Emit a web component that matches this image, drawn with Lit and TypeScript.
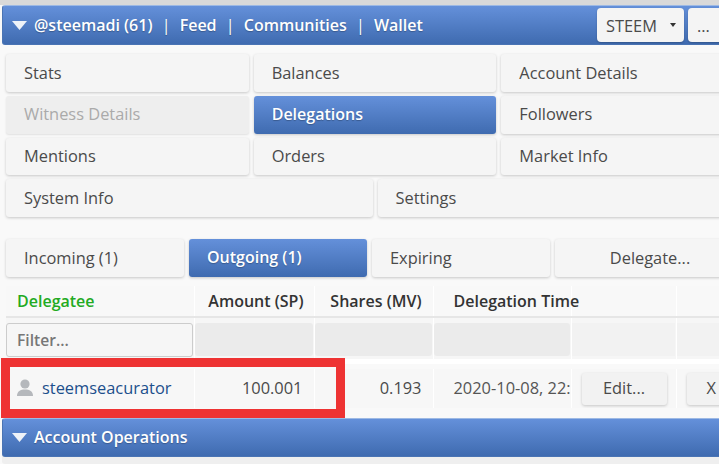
import { LitElement, html, css } from "lit";
import { customElement } from "lit/decorators.js";

@customElement("app-root")
export class AppRoot extends LitElement {
  static styles = css`
    :host {
      display: block;
      position: relative;
      width: 719px;
      height: 464px;
      overflow: hidden;
      background: #f9f9f9;
      font-family: "Open Sans", sans-serif;
      font-size: 16.4px;
      color: #4a4a4a;
    }
    .topline { height: 5px; background: #d9d9d9; }
    .wide { width: 749px; }
    .bar {
      height: 40px;
      margin-left: 2px;
      box-sizing: border-box;
      display: flex;
      align-items: center;
      border: 1px solid #4a74b4;
      border-top-color: #9db9e4;
      border-radius: 3px 0 0 3px;
      background: linear-gradient(#6490da, #3f6bb0);
      color: #fff;
      font-size: 16px;
      font-weight: 600;
      text-shadow: 0 1px 1px rgba(0,0,0,.25);
      padding-left: 9px;
      white-space: nowrap;
    }
    .tri { width: 15px; height: 9px; margin-right: 7px; flex: none; }
    .sep { margin: 0 9.2px; font-weight: 400; }
    .nav { flex: 1; display: flex; }
    .selects { display: flex; gap: 4px; }
    .pick {
      height: 34px; box-sizing: border-box; background: #f4f4f4; border-radius: 4px;
      color: #4a4a4a; font-size: 16.4px; font-weight: 400; text-shadow: none;
      box-shadow: 0 1px 2px rgba(0,0,0,.22);
      display: flex; align-items: center; padding-left: 9px;
    }
    .p1 { width: 87px; gap: 13px; }
    .p2 { width: 60px; }
    .caret { width: 6px; height: 6px; }
    .menu {
      padding: 9.3px 0 0 6px; display: grid; grid-template-columns: repeat(6, 1fr);
      width: 738px; gap: 4px 5px;
    }
    .btn {
      box-sizing: border-box;
      height: 37.7px;
      grid-column: span 2;
      background: #f5f5f5;
      border-radius: 3px;
      box-shadow: 0 1px 3px rgba(0,0,0,.2);
      display: flex; align-items: center;
      padding: 0 0 2px 18px;
      white-space: nowrap;
    }
    .btn.half { grid-column: span 3; }
    .btn.off { color: #aaa; background: #eee; box-shadow: 0 1px 2px rgba(0,0,0,.1); }
    .btn.on {
      background: linear-gradient(#6490da, #3f6bb0);
      color: #fff; font-size: 16px; font-weight: 600;
      text-shadow: 0 1px 1px rgba(0,0,0,.25);
    }
    .tabs {
      margin-top: 22px; padding-left: 6px;
      display: grid; grid-template-columns: 178px 178px 178px 190px; gap: 5px; width: 760px;
    }
    .tabs .btn { grid-column: auto; height: 38px; }
    .tabs .center { justify-content: center; padding: 0 0 2px 0; }
    table {
      margin: 9px 0 0 6px; border-collapse: collapse; table-layout: fixed; width: 760px;
    }
    td { padding: 0; overflow: hidden; white-space: nowrap; border-left: 1px solid #fff; background: #f8f8f8; }
    th {
      padding: 0 0 1px; white-space: nowrap; border-left: 1px solid #fff; background: #f8f8f8;
      height: 29px; font-size: 16px; font-weight: 600; text-align: left; color: #333;
      border-bottom: 2px solid #e6e6e6;
    }
    th:first-child, td:first-child { border-left: 0; }
    th.g { color: #22aa22; padding-left: 11px; }
    th.r { text-align: right; padding-right: 10px; }
    th.s { padding-right: 11px; }
    th.t { padding-left: 20px; }
    .f td { height: 42px; padding: 3px 1px 1px 0; background: #f6f6f6; box-sizing: border-box; }
    .f .fill { display: block; height: 33px; background: #ebebeb; border-radius: 3px; }
    .f .faint { display: block; height: 33px; background: #f2f2f2; }
    .input {
      box-sizing: border-box; height: 34px; border: 1px solid #ccc; border-radius: 3px;
      background: #f6f6f6; color: #777; font-size: 15.6px; font-weight: 600;
      display: flex; align-items: center; padding-left: 10px;
    }
    .d td { height: 37px; background: #f7f7f7; }
    .gap td { height: 5px; background: #fff; border: 0; padding: 0; }
    .gap2 td { height: 5px; background: #f9f9f9; border: 0; padding: 0; }
    .user { display: flex; align-items: center; gap: 8px; padding: 0 0 2px 10px; color: #1c4f8c; }
    .user svg { width: 18px; height: 17px; }
    .d .num { text-align: right; padding: 0 11px 2px 0; }
    .d .date { padding: 0 0 2px 20px; color: #555; }
    .tb {
      box-sizing: border-box; height: 32px; background: #f2f2f2; border-radius: 3px;
      box-shadow: 0 1px 3px rgba(0,0,0,.2);
      display: flex; align-items: center; justify-content: center; padding-bottom: 2px;
    }
    .edit { margin-left: 10px; width: 85px; }
    .x { margin-left: 10px; width: 60px; justify-content: flex-start; padding-left: 20px; }
    .bar2 {
      position: absolute; top: 418px; left: 0; width: 760px; height: 39px; padding-bottom: 1px;
      box-shadow: 0 7px 0 #efefef;
    }
    .mark {
      position: absolute; left: 1px; top: 358px; width: 344px; height: 60px;
      box-sizing: border-box; border: 9px solid #ee3333;
    }
  `;

  tri() {
    return html`<svg class="tri" viewBox="0 0 15 9"><path d="M0 0H15L7.5 9Z" fill="#eef2f8"/></svg>`;
  }

  render() {
    return html`
      <div class="topline"></div>
      <div class="wide">
        <div class="bar">
          ${this.tri()}
          <div class="nav">
            <span>@steemadi (61)</span><span class="sep">|</span><span>Feed</span><span class="sep">|</span><span>Communities</span><span class="sep">|</span><span>Wallet</span>
          </div>
          <div class="selects">
            <div class="pick p1">STEEM<svg class="caret" viewBox="0 0 6 6"><path d="M0 1H6L3 5Z" fill="#333"/></svg></div>
            <div class="pick p2">...</div>
          </div>
        </div>
      </div>
      <div class="menu">
        <div class="btn">Stats</div><div class="btn">Balances</div><div class="btn">Account Details</div>
        <div class="btn off">Witness Details</div><div class="btn on">Delegations</div><div class="btn">Followers</div>
        <div class="btn">Mentions</div><div class="btn">Orders</div><div class="btn">Market Info</div>
        <div class="btn half">System Info</div><div class="btn half">Settings</div>
      </div>
      <div class="tabs">
        <div class="btn">Incoming (1)</div><div class="btn on">Outgoing (1)</div><div class="btn">Expiring</div><div class="btn center">Delegate...</div>
      </div>
      <table>
        <colgroup><col style="width:188px"/><col style="width:120px"/><col style="width:119px"/><col style="width:138px"/><col style="width:105px"/><col style="width:90px"/></colgroup>
        <thead>
          <tr><th class="g">Delegatee</th><th class="r">Amount (SP)</th><th class="r s">Shares (MV)</th><th class="t">Delegation Time</th><th></th><th></th></tr>
        </thead>
        <tbody>
          <tr class="f"><td><div class="input">Filter...</div></td><td><span class="fill"></span></td><td><span class="fill"></span></td><td><span class="fill"></span></td><td><span class="faint"></span></td><td><span class="faint"></span></td></tr>
          <tr class="gap"><td colspan="6"></td></tr>
          <tr class="gap2"><td colspan="6"></td></tr>
          <tr class="d">
            <td><div class="user"><svg viewBox="0 0 18 17"><circle cx="9" cy="5" r="4.6" fill="#b5b8bc"/><path d="M1 17C1 12 4.5 10.5 9 10.5S17 12 17 17Z" fill="#b5b8bc"/></svg>steemseacurator</div></td>
            <td class="num">100.001</td><td class="num">0.193</td><td class="date">2020-10-08, 22:</td>
            <td><div class="tb edit">Edit...</div></td><td><div class="tb x">X</div></td>
          </tr>
        </tbody>
      </table>
      <div class="bar bar2">${this.tri()}<span>Account Operations</span></div>
      <div class="mark"></div>
    `;
  }
}
